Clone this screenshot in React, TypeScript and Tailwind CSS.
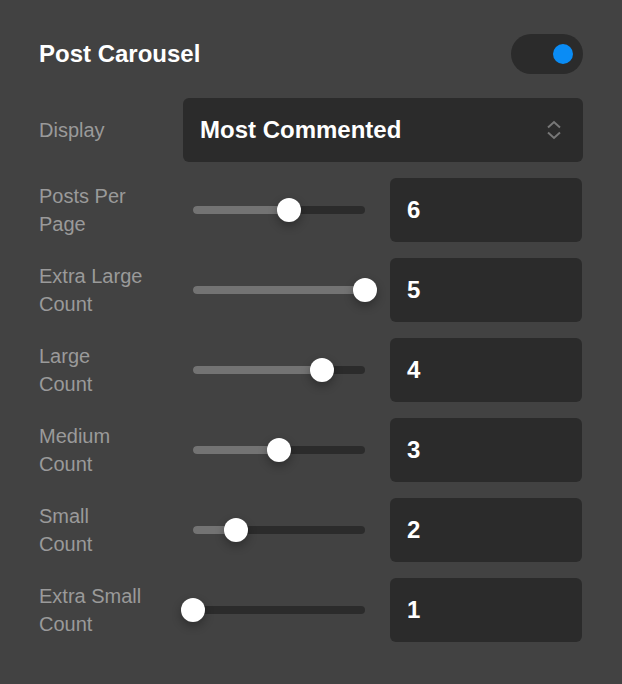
import React from "react";

const font = { fontFamily: '"Liberation Sans", Arial, sans-serif' };

const sliders = [
  { label: ["Posts Per", "Page"], value: 6, min: 1, max: 10 },
  { label: ["Extra Large", "Count"], value: 5, min: 1, max: 5 },
  { label: ["Large", "Count"], value: 4, min: 1, max: 5 },
  { label: ["Medium", "Count"], value: 3, min: 1, max: 5 },
  { label: ["Small", "Count"], value: 2, min: 1, max: 5 },
  { label: ["Extra Small", "Count"], value: 1, min: 1, max: 5 },
];

const Slider = ({ pct }: { pct: number }) => (
  <div className="relative h-2 w-[172px] rounded-sm bg-[#2b2b2b]">
    <div className="h-2 rounded-sm bg-[#737373]" style={{ width: `${pct}%` }} />
    <div
      className="absolute top-1/2 h-6 w-6 -translate-x-1/2 -translate-y-1/2 rounded-full bg-white shadow-[0_4px_10px_rgba(0,0,0,0.3)]"
      style={{ left: `${pct}%` }}
    />
  </div>
);

export default function App() {
  return (
    <div className="min-h-screen bg-[#424242] px-[39px] pt-[34px] text-white" style={font}>
      {/* Header */}
      <div className="flex items-center justify-between">
        <h1 className="text-[24px] font-bold">Post Carousel</h1>
        <div className="flex h-10 w-[72px] items-center justify-end rounded-full bg-[#2b2b2b] pr-[10px]">
          <div className="h-5 w-5 rounded-full bg-[#0a8cf5]" />
        </div>
      </div>

      {/* Display select */}
      <div className="mt-6 flex items-center">
        <span className="w-[144px] text-[20px] text-[#9a9a9a]">Display</span>
        <div className="flex h-16 flex-1 items-center justify-between rounded-md bg-[#2b2b2b] pl-[17px] pr-[20px]">
          <span className="text-[24px] font-bold">Most Commented</span>
          <svg width="18" height="20" viewBox="0 0 18 20" fill="none" stroke="#777" strokeWidth="2">
            <path d="M3 7.5l6-5.5 6 5.5" />
            <path d="M3 12.5l6 5.5 6-5.5" />
          </svg>
        </div>
      </div>

      {/* Sliders */}
      <div className="mt-4 flex flex-col gap-4">
        {sliders.map((s) => {
          const pct = ((s.value - s.min) / (s.max - s.min)) * 100;
          return (
            <div key={s.label[0]} className="flex h-16 items-center">
              <div className="w-[144px] text-[20px] leading-7 text-[#9a9a9a]">
                <div>{s.label[0]}</div>
                <div>{s.label[1]}</div>
              </div>
              <div className="ml-[10px]">
                <Slider pct={pct} />
              </div>
              <div className="ml-[25px] flex h-16 w-[192px] items-center rounded-md bg-[#2b2b2b] pl-[17px] text-[24px] font-bold">
                {s.value}
              </div>
            </div>
          );
        })}
      </div>
    </div>
  );
}
